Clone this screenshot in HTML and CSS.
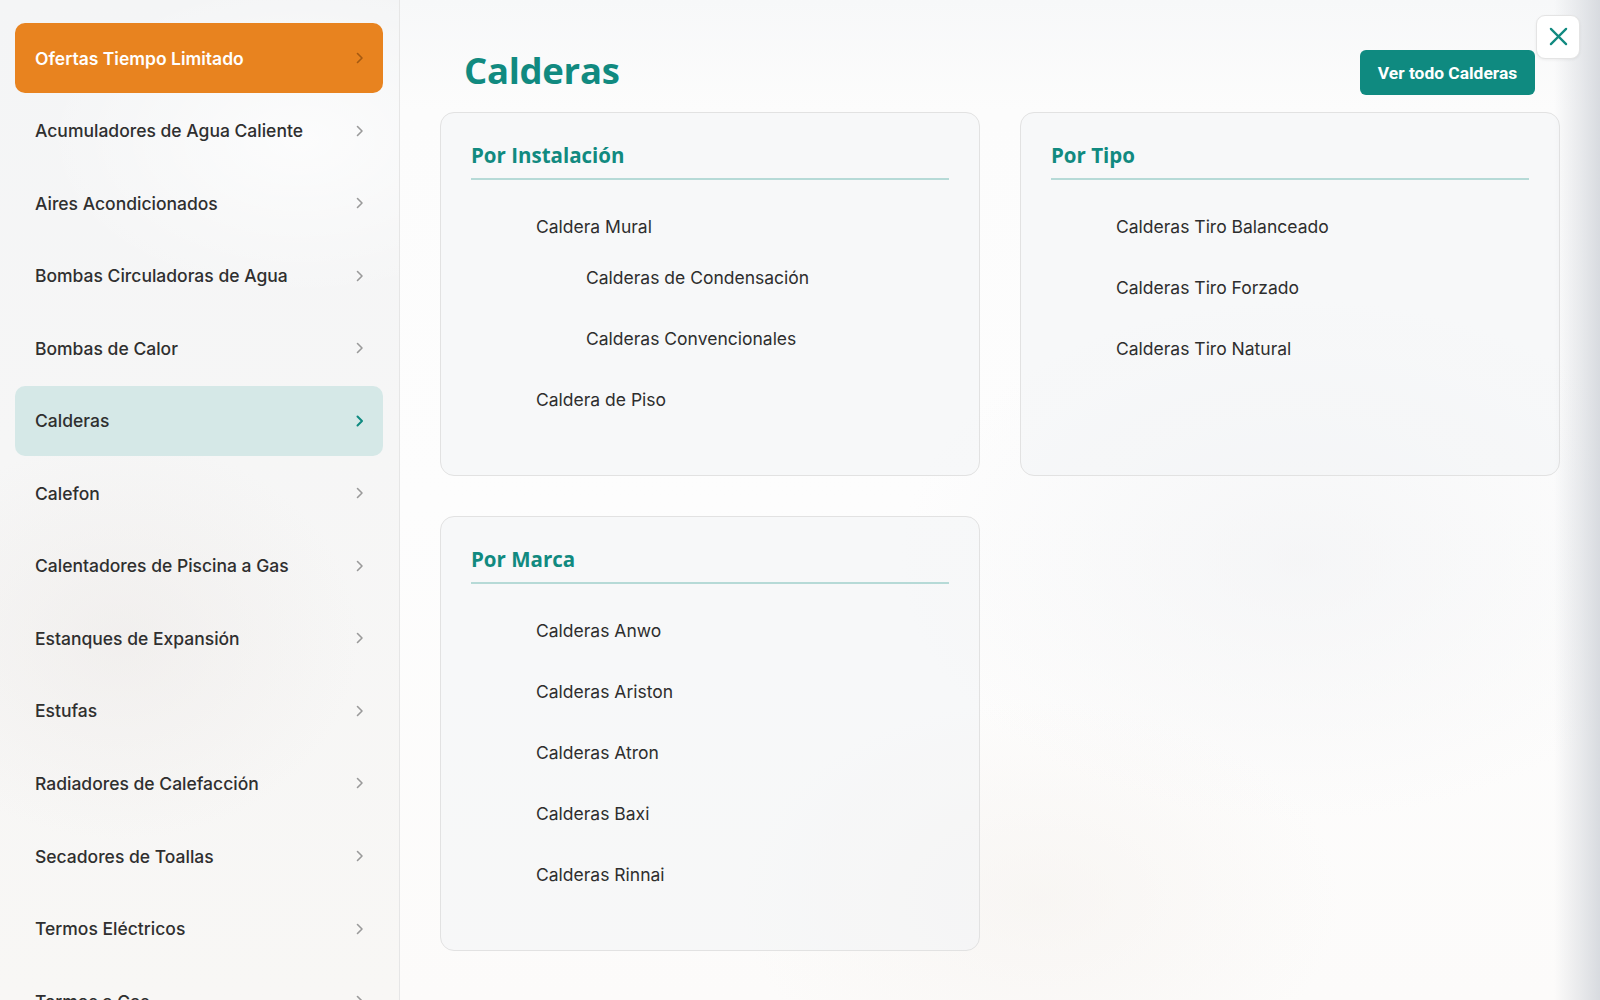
FILE: index.html
```html
<!DOCTYPE html>
<html lang="es">
<head>
<meta charset="utf-8">
<title>Calderas</title>
<link rel="stylesheet" href="styles.css">
</head>
<body>
<div class="menu">
  <aside class="sidebar">
    <nav class="cat-list">
      <a class="cat cat-promo" href="#"><span>Ofertas Tiempo Limitado</span><svg class="chev" viewBox="0 0 8 12"><polyline points="1.5,1.5 6,6 1.5,10.5"/></svg></a>
      <a class="cat" href="#"><span>Acumuladores de Agua Caliente</span><svg class="chev" viewBox="0 0 8 12"><polyline points="1.5,1.5 6,6 1.5,10.5"/></svg></a>
      <a class="cat" href="#"><span>Aires Acondicionados</span><svg class="chev" viewBox="0 0 8 12"><polyline points="1.5,1.5 6,6 1.5,10.5"/></svg></a>
      <a class="cat" href="#"><span>Bombas Circuladoras de Agua</span><svg class="chev" viewBox="0 0 8 12"><polyline points="1.5,1.5 6,6 1.5,10.5"/></svg></a>
      <a class="cat" href="#"><span>Bombas de Calor</span><svg class="chev" viewBox="0 0 8 12"><polyline points="1.5,1.5 6,6 1.5,10.5"/></svg></a>
      <a class="cat cat-active" href="#"><span>Calderas</span><svg class="chev" viewBox="0 0 8 12"><polyline points="1.5,1.5 6,6 1.5,10.5"/></svg></a>
      <a class="cat" href="#"><span>Calefon</span><svg class="chev" viewBox="0 0 8 12"><polyline points="1.5,1.5 6,6 1.5,10.5"/></svg></a>
      <a class="cat" href="#"><span>Calentadores de Piscina a Gas</span><svg class="chev" viewBox="0 0 8 12"><polyline points="1.5,1.5 6,6 1.5,10.5"/></svg></a>
      <a class="cat" href="#"><span>Estanques de Expansión</span><svg class="chev" viewBox="0 0 8 12"><polyline points="1.5,1.5 6,6 1.5,10.5"/></svg></a>
      <a class="cat" href="#"><span>Estufas</span><svg class="chev" viewBox="0 0 8 12"><polyline points="1.5,1.5 6,6 1.5,10.5"/></svg></a>
      <a class="cat" href="#"><span>Radiadores de Calefacción</span><svg class="chev" viewBox="0 0 8 12"><polyline points="1.5,1.5 6,6 1.5,10.5"/></svg></a>
      <a class="cat" href="#"><span>Secadores de Toallas</span><svg class="chev" viewBox="0 0 8 12"><polyline points="1.5,1.5 6,6 1.5,10.5"/></svg></a>
      <a class="cat" href="#"><span>Termos Eléctricos</span><svg class="chev" viewBox="0 0 8 12"><polyline points="1.5,1.5 6,6 1.5,10.5"/></svg></a>
      <a class="cat" href="#"><span>Termos a Gas</span><svg class="chev" viewBox="0 0 8 12"><polyline points="1.5,1.5 6,6 1.5,10.5"/></svg></a>
    </nav>
  </aside>

  <main class="panel">
    <header class="panel-head">
      <h1 class="panel-title">Calderas</h1>
      <a class="btn-all" href="#">Ver todo Calderas</a>
    </header>

    <section class="groups">
      <div class="group">
        <h2 class="group-title">Por Instalación</h2>
        <ul class="links">
          <li><a href="#">Caldera Mural</a>
            <ul class="links links-sub">
              <li><a href="#">Calderas de Condensación</a></li>
              <li><a href="#">Calderas Convencionales</a></li>
            </ul>
          </li>
          <li><a href="#">Caldera de Piso</a></li>
        </ul>
      </div>

      <div class="group">
        <h2 class="group-title">Por Tipo</h2>
        <ul class="links">
          <li><a href="#">Calderas Tiro Balanceado</a></li>
          <li><a href="#">Calderas Tiro Forzado</a></li>
          <li><a href="#">Calderas Tiro Natural</a></li>
        </ul>
      </div>

      <div class="group">
        <h2 class="group-title">Por Marca</h2>
        <ul class="links">
          <li><a href="#">Calderas Anwo</a></li>
          <li><a href="#">Calderas Ariston</a></li>
          <li><a href="#">Calderas Atron</a></li>
          <li><a href="#">Calderas Baxi</a></li>
          <li><a href="#">Calderas Rinnai</a></li>
        </ul>
      </div>
    </section>

    <button class="btn-close" type="button" aria-label="Cerrar">
      <svg viewBox="0 0 20 20"><path d="M2 2 L18 18 M18 2 L2 18"/></svg>
    </button>
  </main>
</div>
</body>
</html>
```

FILE: styles.css
```css
* {
  box-sizing: border-box;
}

html, body {
  margin: 0;
  height: 100%;
}

body {
  font-family: "Inter", "Liberation Sans", sans-serif;
  color: #2e2e2e;
  overflow: hidden;
}

a {
  text-decoration: none;
  color: inherit;
}

.menu {
  display: flex;
  height: 1000px;
  width: 1600px;
}

/* ---------- category sidebar ---------- */
.sidebar {
  width: 400px;
  flex: none;
  height: 100%;
  overflow: hidden;
  padding: 23px 16px 0 15px;
  border-right: 1px solid #e6e6e6;
  background:
    radial-gradient(ellipse 260px 160px at 300px 140px, rgba(255,255,255,0.7), rgba(255,255,255,0)),
    radial-gradient(ellipse 240px 200px at 120px 640px, rgba(236,232,230,0.5), rgba(236,232,230,0)),
    linear-gradient(180deg, #f4f5f6 0%, #f6f6f6 45%, #f8f7f5 100%);
}

.cat-list {
  display: flex;
  flex-direction: column;
  gap: 2.55px;
}

.cat {
  height: 70px;
  flex: none;
  display: flex;
  align-items: center;
  justify-content: space-between;
  padding: 0 19px 0 20px;
  border-radius: 10px;
  font-size: 17.5px;
  font-weight: 500;
  color: #2f2f2f;
}

.chev {
  width: 8px;
  height: 12px;
  fill: none;
  stroke: #9a9a9a;
  stroke-width: 1.6;
  stroke-linecap: round;
  stroke-linejoin: round;
}

.cat-promo {
  background: #e8831f;
  color: #ffffff;
  font-weight: 600;
}

.cat-promo .chev {
  stroke: rgba(110, 55, 5, 0.55);
}

.cat-active {
  background: #d5e8e7;
}

.cat-active .chev {
  stroke: #0e8a80;
  stroke-width: 2;
}

/* ---------- subcategory panel ---------- */
.panel {
  position: relative;
  flex: 1;
  height: 100%;
  padding: 0 40px 0 40px;
  background:
    radial-gradient(ellipse 300px 200px at 640px 900px, rgba(244,240,236,0.5), rgba(244,240,236,0)),
    radial-gradient(ellipse 400px 260px at 900px 560px, rgba(240,241,243,0.6), rgba(240,241,243,0)),
    linear-gradient(180deg, #f7f8f9 0%, #fcfcfc 110px, #fdfdfd 50%, #fcfbfa 100%);
}

/* soft shadow along the right edge of the drawer */
.panel::after {
  content: "";
  position: absolute;
  top: 0;
  right: 0;
  bottom: 0;
  width: 46px;
  pointer-events: none;
  background: linear-gradient(90deg, rgba(214,217,222,0) 0%, rgba(214,217,222,0.55) 60%, rgba(214,217,222,0.95) 100%);
}

.panel-head {
  display: flex;
  justify-content: space-between;
  align-items: flex-start;
  padding: 50px 25px 0 24px;
  height: 112px;
}

.panel-title {
  margin: 1px 0 0 0;
  font-family: "Open Sans", "Liberation Sans", sans-serif;
  font-weight: 700;
  font-size: 36.5px;
  line-height: 39px;
  letter-spacing: -0.3px;
  color: #118a80;
}

.btn-all {
  display: flex;
  align-items: center;
  justify-content: center;
  width: 175px;
  height: 45px;
  border-radius: 6px;
  background: #0f8a80;
  color: #ffffff;
  font-family: "Roboto", "Inter", sans-serif;
  font-weight: 700;
  font-size: 17.4px;
}

.btn-close {
  position: absolute;
  top: 14.5px;
  right: 20px;
  width: 44px;
  height: 44px;
  padding: 0;
  display: flex;
  align-items: center;
  justify-content: center;
  border: 1px solid #e4e4e4;
  border-radius: 9px;
  background: #ffffff;
  box-shadow: 0 1px 3px rgba(0,0,0,0.06);
  z-index: 2;
}

.btn-close svg {
  width: 19px;
  height: 19px;
  fill: none;
  stroke: #118a80;
  stroke-width: 2.4;
  stroke-linecap: round;
}

.groups {
  display: grid;
  grid-template-columns: 1fr 1fr;
  gap: 40px;
}

.group {
  border: 1px solid #e2e2e2;
  border-radius: 14px;
  padding: 29px 30px 31px 30px;
  background: rgba(243, 244, 245, 0.55);
}

.group-title {
  margin: 0;
  font-family: "Open Sans", "Liberation Sans", sans-serif;
  font-weight: 700;
  font-size: 20.5px;
  line-height: 26px;
  color: #118a80;
  padding-bottom: 10px;
  border-bottom: 2px solid #b6dad7;
}

.links {
  list-style: none;
  margin: 16px 0 0 0;
  padding: 0 0 14px 65px;
}

.links li a {
  display: block;
  line-height: 61px;
  font-size: 17.5px;
  font-weight: 400;
  color: #2e2e2e;
}

.links-sub {
  margin-top: -10px;
  padding: 0 0 0 50px;
}
```
